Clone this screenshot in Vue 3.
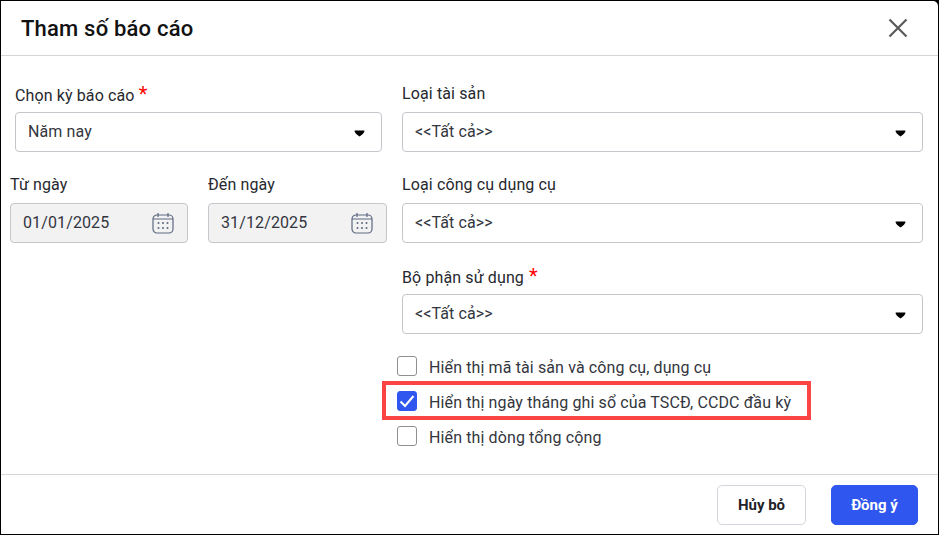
<script setup>
const checks = [
  { text: 'Hiển thị mã tài sản và công cụ, dụng cụ', checked: false, marked: false },
  { text: 'Hiển thị ngày tháng ghi sổ của TSCĐ, CCDC đầu kỳ', checked: true, marked: true },
  { text: 'Hiển thị dòng tổng cộng', checked: false, marked: false }
]
const dates = [
  { label: 'Từ ngày', value: '01/01/2025' },
  { label: 'Đến ngày', value: '31/12/2025' }
]
const selects = [
  { label: 'Loại tài sản', required: false },
  { label: 'Loại công cụ dụng cụ', required: false },
  { label: 'Bộ phận sử dụng', required: true }
]
</script>

<template>
  <div class="screen">
    <div class="dialog">
      <header class="head">
        <h1 class="title">Tham số báo cáo</h1>
        <svg class="close" width="22" height="22" viewBox="0 0 22 22" fill="none" stroke="#5a5a5a" stroke-width="2.2">
          <path d="M2.5 2.5 L19.5 19.5 M19.5 2.5 L2.5 19.5" />
        </svg>
      </header>

      <main class="body">
        <section class="left">
          <div class="field inset">
            <label class="label">Chọn kỳ báo cáo <span class="req">*</span></label>
            <div class="control">
              <span class="value">Năm nay</span>
              <svg class="caret" width="11" height="7" viewBox="0 0 11 7"><path d="M0.5 1 Q0.5 0.5 1 0.5 H10 Q10.5 0.5 10.5 1 Q10 3.5 5.5 6.5 Q1 3.5 0.5 1 Z" fill="#000" /></svg>
            </div>
          </div>
          <div class="dates">
            <div v-for="d in dates" :key="d.label" class="field">
              <label class="label">{{ d.label }}</label>
              <div class="control disabled">
                <span class="value">{{ d.value }}</span>
                <svg class="cal" width="22" height="22" viewBox="0 0 22 22" fill="none" stroke="#5d6880" stroke-width="1.2">
                  <rect x="1" y="3" width="20" height="18" rx="4" />
                  <path d="M6 1 V5 M16 1 V5 M1 7 H21" />
                  <g fill="#5d6880" stroke="none">
                    <circle cx="6.5" cy="11" r="1" /><circle cx="11" cy="11" r="1" /><circle cx="15.5" cy="11" r="1" />
                    <circle cx="6.5" cy="16" r="1" /><circle cx="11" cy="16" r="1" /><circle cx="15.5" cy="16" r="1" />
                  </g>
                </svg>
              </div>
            </div>
          </div>
        </section>

        <section class="right">
          <div v-for="s in selects" :key="s.label" class="field">
            <label class="label">{{ s.label }}<span v-if="s.required" class="req"> *</span></label>
            <div class="control">
              <span class="value">&lt;&lt;Tất cả&gt;&gt;</span>
              <svg class="caret" width="11" height="7" viewBox="0 0 11 7"><path d="M0.5 1 Q0.5 0.5 1 0.5 H10 Q10.5 0.5 10.5 1 Q10 3.5 5.5 6.5 Q1 3.5 0.5 1 Z" fill="#000" /></svg>
            </div>
          </div>
          <div class="checks">
            <div v-for="c in checks" :key="c.text" class="check">
              <span v-if="c.marked" class="mark"></span>
              <span class="box" :class="{ on: c.checked }">
                <svg v-if="c.checked" width="20" height="20" viewBox="0 0 20 20" fill="none" stroke="#fff" stroke-width="2">
                  <path d="M3.5 10.5 L8 15 L16.5 5" />
                </svg>
              </span>
              <span class="check-text">{{ c.text }}</span>
            </div>
          </div>
        </section>
      </main>

      <footer class="foot">
        <button class="btn ghost">Hủy bỏ</button>
        <button class="btn primary">Đồng ý</button>
      </footer>
    </div>
  </div>
</template>

<style>
html, body { margin: 0; background: #000; }
</style>

<style scoped>
.screen {
  width: 939px;
  height: 535px;
  box-sizing: border-box;
  padding: 1px;
  background: #000;
  font-family: Roboto, "Noto Sans", sans-serif;
  color: #1f2229;
  overflow: hidden;
}
.dialog {
  height: 100%;
  background: #fff;
  border-radius: 0 5px 0 0;
  display: flex;
  flex-direction: column;
}
.head {
  height: 55px;
  flex: none;
  box-sizing: border-box;
  border-bottom: 1px solid #d4d4d4;
  display: flex;
  align-items: center;
  justify-content: space-between;
  padding: 0 29px 0 20px;
}
.title {
  margin: 0;
  font-size: 22px;
  font-weight: 500;
  letter-spacing: 0.2px;
  color: #111;
}
.close { display: block; }
.body {
  flex: 1;
  display: flex;
  gap: 15px;
  padding: 27px 15px 0 9px;
}
.left { width: 377px; flex: none; display: flex; flex-direction: column; gap: 22px; }
.right { flex: 1; display: flex; flex-direction: column; gap: 22px; }
.inset { margin: 0 5px; }
.dates { display: grid; grid-template-columns: 178px 179px; gap: 20px; }
.field { display: flex; flex-direction: column; gap: 9px; }
.label { font-size: 16px; line-height: 22px; height: 20px; color: #26282e; letter-spacing: 0.12px; }
.req { color: #f00; font-size: 20px; }
.control {
  height: 40px;
  box-sizing: border-box;
  border: 1px solid #c4c6cb;
  border-radius: 4px;
  padding: 0 16px 0 12px;
  display: flex;
  align-items: center;
  justify-content: space-between;
  font-size: 16px;
  color: #33363d;
  letter-spacing: 0.12px;
}
.value { margin-bottom: 2px; }
.disabled { background: #f2f2f3; padding-right: 13px; }
.caret { display: block; margin-top: 2px; }
.cal { display: block; }
.checks { display: flex; flex-direction: column; gap: 15px; margin-left: -5px; }
.check { position: relative; height: 20px; display: flex; align-items: center; gap: 12px; font-size: 16px; color: #33363d; letter-spacing: 0.12px; }
.box {
  width: 20px;
  height: 20px;
  box-sizing: border-box;
  border: 1px solid #8f9094;
  border-radius: 3px;
  flex: none;
  background: #fff;
  position: relative;
  z-index: 1;
}
.box.on { background: #2f56ee; border-color: #2f56ee; }
.box svg { display: block; margin: -1px; }
.check-text { position: relative; z-index: 1; margin-top: 3px; }
.mark {
  position: absolute;
  left: -15px;
  top: -10px;
  width: 429px;
  height: 39px;
  box-sizing: border-box;
  border: 4px solid #fb4444;
}
.foot {
  height: 60px;
  flex: none;
  box-sizing: border-box;
  border-top: 1px solid #d4d6da;
  display: flex;
  justify-content: flex-end;
  align-items: flex-start;
  gap: 25px;
  padding: 10px 20px 0 0;
}
.btn {
  height: 40px;
  border-radius: 5px;
  font-family: inherit;
  font-size: 15px;
  font-weight: 700;
  padding: 0;
}
.ghost { width: 89px; background: #fff; border: 1px solid #d3d6dc; color: #1f2229; }
.primary { width: 87px; background: #2f56ee; border: 1px solid #2f56ee; color: #fff; }
</style>
